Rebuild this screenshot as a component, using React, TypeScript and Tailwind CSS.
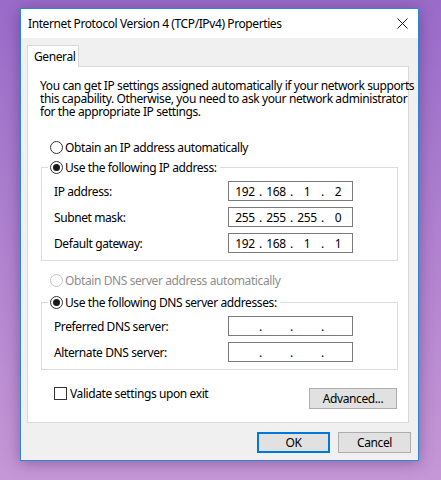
import { Fragment } from 'react'

function Radio({ checked, disabled }: { checked?: boolean; disabled?: boolean }) {
  return (
    <span
      className={`flex h-[13px] w-[13px] shrink-0 items-center justify-center rounded-full border bg-white ${
        disabled ? 'border-[#c4c4c4]' : 'border-[#333333]'
      }`}
    >
      {checked && <span className="h-[7px] w-[7px] rounded-full bg-[#1a1a1a]" />}
    </span>
  )
}

function IpBox({ parts }: { parts: string[] }) {
  return (
    <div className="flex h-[20px] w-[125px] shrink-0 items-center border border-[#7a7a7a] bg-white pl-[4px]">
      {parts.map((p, i) => (
        <Fragment key={i}>
          <span className="w-[24px] text-center">{p}</span>
          {i < 3 && <span className="w-[7px] text-center">.</span>}
        </Fragment>
      ))}
    </div>
  )
}

function FieldRow({ label, parts }: { label: string; parts: string[] }) {
  return (
    <div className="flex h-[20px] items-center">
      <span className="w-[180px] shrink-0 pl-[6px]">{label}</span>
      <IpBox parts={parts} />
    </div>
  )
}

function Button({ children, primary, className = '' }: { children: string; primary?: boolean; className?: string }) {
  return (
    <button
      className={`flex h-[21px] shrink-0 items-center justify-center bg-[#e1e1e1] text-black ${
        primary ? 'border-2 border-[#0078d7]' : 'border border-[#adadad]'
      } ${className}`}
      type="button"
    >
      {children}
    </button>
  )
}

export default function App() {
  return (
    <div className="h-[480px] w-[441px] overflow-hidden bg-gradient-to-b from-[#9a6bc8] to-[#c597d5] pt-[8px] pl-[20px] font-['Noto_Sans',sans-serif] text-[12px] leading-[13px] tracking-[-0.4px] whitespace-nowrap text-black">
      <div className="flex h-[453px] w-[399px] flex-col border border-[#2b87d3] bg-[#f0f0f0] shadow-[0_2px_14px_rgba(40,0,70,0.35)]">
        {/* title bar */}
        <div className="flex h-[29px] shrink-0 items-center justify-between bg-white pr-[10px] pl-[7px]">
          <span>Internet Protocol Version 4 (TCP/IPv4) Properties</span>
          <svg width="11" height="11" viewBox="0 0 11 11" className="text-[#1a1a1a]">
            <path d="M0.5 0.5L10.5 10.5M10.5 0.5L0.5 10.5" stroke="currentColor" strokeWidth="1" />
          </svg>
        </div>

        <div className="flex flex-1 flex-col pt-[7px] pr-[7px] pl-[6px]">
          <div className="relative z-10 -mb-[1px] flex h-[22px] w-[52px] shrink-0 items-center border border-b-0 border-[#d9d9d9] bg-white pl-[6px]">
            General
          </div>

          <div className="mr-[2px] flex shrink-0 flex-col border border-[#d9d9d9] bg-white pt-[12px] pb-[13px]">
            <p className="pl-[12px]">
              You can get IP settings assigned automatically if your network supports
              <br />
              this capability. Otherwise, you need to ask your network administrator
              <br />
              for the appropriate IP settings.
            </p>

            <div className="mt-[19px] ml-[22px] flex h-[20px] items-center gap-[2px]">
              <Radio />
              <span>Obtain an IP address automatically</span>
            </div>

            <fieldset className="mr-[10px] ml-[13px] border border-[#dcdcdc] px-[6px] pb-[7px]">
              <legend className="pr-[3px] pl-[2px]">
                <span className="flex h-[20px] items-center gap-[2px]">
                  <Radio checked />
                  <span>Use the following IP address:</span>
                </span>
              </legend>
              <div className="mt-[4px] flex flex-col gap-[6px]">
                <FieldRow label="IP address:" parts={['192', '168', '1', '2']} />
                <FieldRow label="Subnet mask:" parts={['255', '255', '255', '0']} />
                <FieldRow label="Default gateway:" parts={['192', '168', '1', '1']} />
              </div>
            </fieldset>

            <div className="mt-[9px] ml-[22px] flex h-[20px] items-center gap-[2px] text-[#8d8d8d]">
              <Radio disabled />
              <span>Obtain DNS server address automatically</span>
            </div>

            <fieldset className="mt-[2px] mr-[10px] ml-[13px] border border-[#dcdcdc] px-[6px] pb-[7px]">
              <legend className="pr-[3px] pl-[2px]">
                <span className="flex h-[20px] items-center gap-[2px]">
                  <Radio checked />
                  <span>Use the following DNS server addresses:</span>
                </span>
              </legend>
              <div className="mt-[4px] flex flex-col gap-[6px]">
                <FieldRow label="Preferred DNS server:" parts={['', '', '', '']} />
                <FieldRow label="Alternate DNS server:" parts={['', '', '', '']} />
              </div>
            </fieldset>

            <div className="mt-[17px] flex items-start justify-between pr-[11px] pl-[26px]">
              <div className="flex h-[13px] items-center gap-[3px]">
                <span className="h-[13px] w-[13px] shrink-0 border border-[#333333] bg-white" />
                <span>Validate settings upon exit</span>
              </div>
              <Button className="mt-[1px] w-[88px]">Advanced...</Button>
            </div>
          </div>

          <div className="mt-[9px] flex justify-end gap-[8px]">
            <Button primary className="w-[73px]">
              OK
            </Button>
            <Button className="w-[73px]">Cancel</Button>
          </div>
        </div>
      </div>
    </div>
  )
}
